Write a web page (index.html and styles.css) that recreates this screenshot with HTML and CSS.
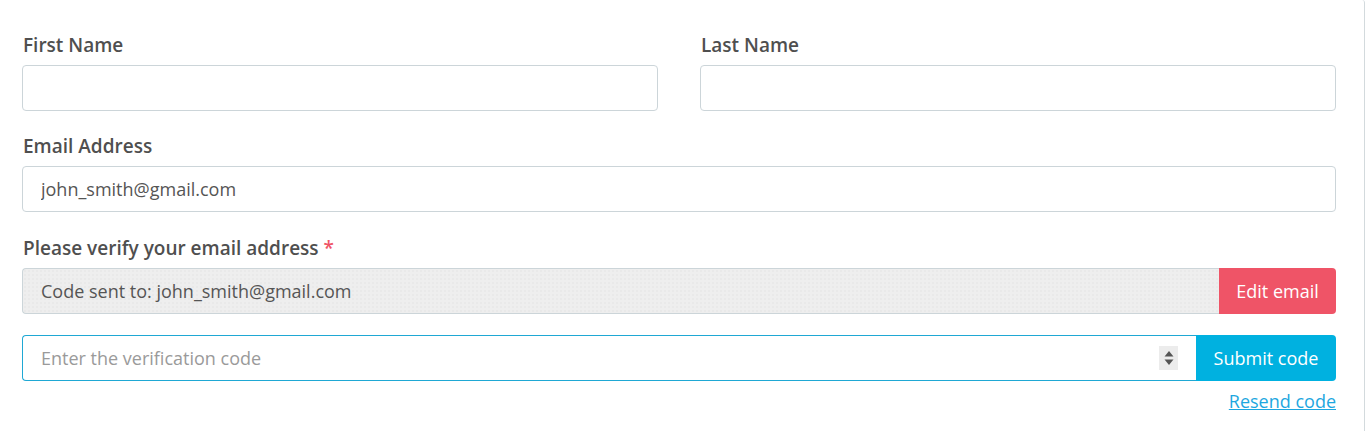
FILE: index.html
```html
<!DOCTYPE html>
<html lang="en">
<head>
<meta charset="utf-8">
<title>Verify email</title>
<link rel="stylesheet" href="styles.css">
</head>
<body>
<div class="card">
  <form class="form">
    <div class="row two">
      <div class="field">
        <label class="label">First Name</label>
        <input class="input" type="text">
      </div>
      <div class="field">
        <label class="label">Last Name</label>
        <input class="input" type="text">
      </div>
    </div>
    <div class="field email-field">
      <label class="label">Email Address</label>
      <input class="input" type="text" value="john_smith@gmail.com">
    </div>
    <div class="field">
      <label class="label">Please verify your email address <span class="req">*</span></label>
      <div class="group">
        <div class="readonly">Code sent to: john_smith@gmail.com</div>
        <button type="button" class="btn btn-red">Edit email</button>
      </div>
    </div>
    <div class="group code-group">
      <div class="code-wrap">
        <input class="input code" type="text" placeholder="Enter the verification code">
        <span class="spin">
          <svg width="10" height="16" viewBox="0 0 10 16"><path d="M5 1 L9.5 6.5 H0.5 Z" fill="#555"/><path d="M0.5 9.5 H9.5 L5 15 Z" fill="#555"/></svg>
        </span>
      </div>
      <button type="button" class="btn btn-blue">Submit code</button>
    </div>
    <div class="resend-row"><a class="resend" href="#">Resend code</a></div>
  </form>
</div>
</body>
</html>
```
FILE: styles.css
```css
html, body {
  margin: 0;
  padding: 0;
  background: #fff;
}
body {
  font-family: "Open Sans", "Liberation Sans", sans-serif;
  color: #555;
}
.card {
  width: 1364px;
  height: 431px;
  border-right: 1px solid #d3dadd;
  border-top-right-radius: 3px;
  box-sizing: content-box;
}
.form {
  padding: 33px 28px 0 22px;
  display: flex;
  flex-direction: column;
}
.row.two {
  display: grid;
  grid-template-columns: 636px 636px;
  column-gap: 42px;
}
.field {
  display: flex;
  flex-direction: column;
  margin-bottom: 23px;
}
.email-field {
  margin-bottom: 24px;
}
.label {
  font-size: 19px;
  font-weight: 600;
  line-height: 24px;
  color: #4f4f4f;
  margin-bottom: 8px;
  padding-left: 1px;
}
.req {
  color: #ef5466;
}
.input {
  height: 46px;
  box-sizing: border-box;
  border: 1px solid #ccd5d9;
  border-radius: 4px;
  padding: 0 18px;
  font-family: inherit;
  font-size: 18px;
  color: #555;
  background: #fff;
  outline: none;
  width: 100%;
}
.input::placeholder {
  color: #9a9a9a;
}
.group {
  display: flex;
  height: 46px;
}
.readonly {
  flex: 1;
  box-sizing: border-box;
  border: 1px solid #ccd5d9;
  border-right: none;
  border-radius: 4px 0 0 4px;
  background-color: #eeeeee;
  background-image: radial-gradient(circle, #e2e2e2 0.6px, transparent 0.8px);
  background-size: 4px 4px;
  padding: 0 18px;
  font-size: 18px;
  line-height: 44px;
  color: #555;
}
.btn {
  border: none;
  font-family: inherit;
  font-size: 18px;
  color: #fff;
  padding: 0;
  border-radius: 0 4px 4px 0;
  cursor: pointer;
}
.btn-red {
  width: 117px;
  background: #ef5467;
}
.btn-blue {
  width: 140px;
  background: #00b1e0;
}
.code-group {
  margin-top: -2px;
}
.code-wrap {
  flex: 1;
  position: relative;
  display: flex;
}
.input.code {
  border-color: #1fa8d4;
  border-right: none;
  border-radius: 4px 0 0 4px;
}
.spin {
  position: absolute;
  right: 18px;
  top: 11px;
  width: 19px;
  height: 24px;
  background: #ececec;
  display: flex;
  align-items: center;
  justify-content: center;
}
.resend-row {
  display: flex;
  justify-content: flex-end;
  margin-top: 8px;
}
.resend {
  font-size: 18px;
  line-height: 24px;
  color: #1ea7e0;
  text-decoration: underline;
}
```
